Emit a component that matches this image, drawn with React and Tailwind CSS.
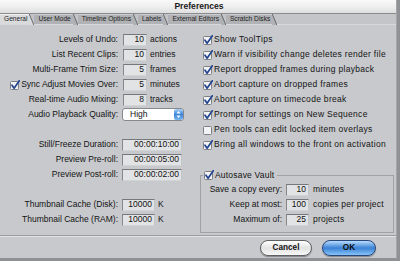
import React from 'react';

const leftRows = [
  { label: 'Levels of Undo:', value: '10', unit: 'actions', w: 'w-[24px] ml-[1px]' },
  { label: 'List Recent Clips:', value: '10', unit: 'entries', w: 'w-[24px] ml-[1px]' },
  { label: 'Multi-Frame Trim Size:', value: '5', unit: 'frames', w: 'w-[24px] ml-[1px]' },
  { label: 'Sync Adjust Movies Over:', value: '5', unit: 'minutes', w: 'w-[24px] ml-[1px]', check: true },
  { label: 'Real-time Audio Mixing:', value: '8', unit: 'tracks', w: 'w-[24px] ml-[1px]' },
  { label: 'Audio Playback Quality:', popup: 'High' },
  null,
  { label: 'Still/Freeze Duration:', value: '00:00:10:00', w: 'w-[60px]' },
  { label: 'Preview Pre-roll:', value: '00:00:05:00', w: 'w-[60px]' },
  { label: 'Preview Post-roll:', value: '00:00:02:00', w: 'w-[60px]' },
  null,
  { label: 'Thumbnail Cache (Disk):', value: '10000', unit: 'K', w: 'w-[33px]' },
  { label: 'Thumbnail Cache (RAM):', value: '10000', unit: 'K', w: 'w-[33px]' },
];

const rightChecks = [
  ['Show ToolTips', true],
  ['Warn if visibility change deletes render file', true],
  ['Report dropped frames during playback', true],
  ['Abort capture on dropped frames', true],
  ['Abort capture on timecode break', true],
  ['Prompt for settings on New Sequence', true],
  ['Pen tools can edit locked item overlays', false],
  ['Bring all windows to the front on activation', true],
];

const vault = [
  ['Save a copy every:', '10', 'minutes'],
  ['Keep at most:', '100', 'copies per project'],
  ['Maximum of:', '25', 'projects'],
];

const tabs = ['General', 'User Mode', 'Timeline Options', 'Labels', 'External Editors', 'Scratch Disks'];

function CheckBox({ checked }) {
  return (
    <svg width="10" height="10" viewBox="0 0 10 10" className="shrink-0">
      <rect x="0.5" y="1.5" width="8" height="8" rx="1" fill="#f2f3f4" stroke="#7d7f82" />
      {checked && (
        <path d="M2 5.2 L4.1 8.2 L9.3 0.8" fill="none" stroke="#23448f" strokeWidth="1.7" strokeLinecap="round" strokeLinejoin="round" />
      )}
    </svg>
  );
}

function Field({ value, w }) {
  return (
    <div className={`h-[12px] ${w} flex items-center justify-end pr-[2px] bg-[#e2e3e5] border border-t-[#75777a] border-l-[#85878a] border-r-[#c2c4c6] border-b-[#d2d3d5] text-[#111]`}>
      {value}
    </div>
  );
}

function Tab({ label, active }) {
  return (
    <div className="flex h-full">
      <div className={`flex items-center pl-[4px] pr-[2px] text-[6.6px] text-[#1e1e1e] border-t ${active ? 'bg-[#d9dadc] border-[#f0f0f0]' : 'bg-[#b0b2b5] border-[#cbcccf]'}`}>
        {label}
      </div>
      <svg width="5" height="11" viewBox="0 0 5 11" className="shrink-0">
        <polygon points="0,0 0,11 5,11" fill={active ? '#d9dadc' : '#b0b2b5'} />
        <line x1="0.3" y1="0" x2="4.8" y2="11" stroke="#5f6164" strokeWidth="0.9" />
      </svg>
    </div>
  );
}

export default function App() {
  return (
    <div className="w-[400px] h-[261px] bg-[#8f9194] overflow-hidden font-['Liberation_Sans',Arial,sans-serif] text-[8.5px] leading-none text-[#141414]">
      <div className="w-[397px] h-[258px] bg-[#c7c9cc] flex flex-col border-r border-[#a4a6a9]">
        {/* title bar */}
        <div className="h-[14px] shrink-0 flex items-center justify-center bg-gradient-to-b from-[#f9f9f9] via-[#efefef] to-[#dedede] border-b border-[#8a8b8d]">
          <span className="font-bold text-[8.6px] text-[#1a1a1a] pl-[2px]">Preferences</span>
        </div>

        {/* tabs */}
        <div className="h-[11px] shrink-0 flex items-stretch pl-[0px] bg-[#c3c5c8] border-b border-[#d8d9db]">
          {tabs.map((t, i) => (
            <Tab key={t} label={t} active={i === 0} />
          ))}
        </div>

        {/* content */}
        <div className="h-[210px] shrink-0 flex pt-[7px]">
          <div className="w-[200px] shrink-0 grid grid-cols-[118px_1fr] auto-rows-[15px] gap-x-[4px] content-start">
            {leftRows.map((r, i) =>
              r === null ? (
                <div key={i} className="col-span-2" />
              ) : (
                <React.Fragment key={i}>
                  <div className="flex items-center justify-end gap-[1px]">
                    {r.check && <CheckBox checked />}
                    <span>{r.label}</span>
                  </div>
                  <div className="flex items-center gap-[3px]">
                    {r.popup ? (
                      <div className="h-[13px] w-[62px] flex items-center justify-between bg-white border border-[#86888b] rounded-[3px] pl-[7px] overflow-hidden">
                        <span>{r.popup}</span>
                        <svg width="9" height="11" viewBox="0 0 9 11" className="shrink-0">
                          <defs>
                            <linearGradient id="pg" x1="0" y1="0" x2="0" y2="1">
                              <stop offset="0" stopColor="#a9d1f7" />
                              <stop offset="0.5" stopColor="#3d84d8" />
                              <stop offset="1" stopColor="#7bb8f0" />
                            </linearGradient>
                          </defs>
                          <rect x="0" y="0" width="9" height="11" rx="2" fill="url(#pg)" />
                          <polygon points="2.5,4.5 4.5,2 6.5,4.5" fill="#fff" />
                          <polygon points="2.5,6.5 4.5,9 6.5,6.5" fill="#fff" />
                        </svg>
                      </div>
                    ) : (
                      <Field value={r.value} w={r.w} />
                    )}
                    {r.unit && <span>{r.unit}</span>}
                  </div>
                </React.Fragment>
              )
            )}
          </div>

          <div className="flex-1 flex flex-col pr-[2px]">
            <div className="pl-[3px] flex flex-col">
              {rightChecks.map(([t, c]) => (
                <div key={t} className="h-[15px] flex items-center gap-[1px]">
                  <CheckBox checked={c} />
                  <span className="tracking-[0.3px]">{t}</span>
                </div>
              ))}
            </div>

            <fieldset className="mt-[18px] border border-[#9fa1a4] pb-[5px]">
              <legend className="ml-[2px] px-[1px] flex items-center gap-[1px] h-[10px]">
                <CheckBox checked />
                <span className="pr-[2px] tracking-[0.2px]">Autosave Vault</span>
              </legend>
              <div className="grid grid-cols-[81px_23px_1fr] auto-rows-[15px] gap-x-[4px] pt-[2px]">
                {vault.map(([l, v, u]) => (
                  <React.Fragment key={l}>
                    <div className="flex items-center justify-end">{l}</div>
                    <div className="flex items-center">
                      <Field value={v} w="w-[23px]" />
                    </div>
                    <div className="flex items-center tracking-[0.2px]">{u}</div>
                  </React.Fragment>
                ))}
              </div>
            </fieldset>
          </div>
        </div>

        {/* separator */}
        <div className="h-[2px] shrink-0 border-t border-[#9a9c9f] bg-[#e3e4e6]" />

        {/* buttons */}
        <div className="flex-1 flex justify-end items-start gap-[10px] pr-[20px] pt-[3px]">
          <button className="h-[16px] w-[52px] rounded-full border border-[#5f6063] bg-gradient-to-b from-[#ffffff] via-[#e3e3e3] to-[#f7f7f7] font-bold text-[8.2px] text-[#111] shadow-[0_1px_1px_rgba(0,0,0,0.35)]">
            Cancel
          </button>
          <button className="h-[16px] w-[54px] rounded-full border border-[#27467c] bg-gradient-to-b from-[#b7dcfb] via-[#3b82d6] to-[#86c3f6] font-bold text-[8.2px] text-[#0b0b0b] shadow-[0_1px_1px_rgba(0,0,0,0.35)]">
            OK
          </button>
        </div>
      </div>
    </div>
  );
}
